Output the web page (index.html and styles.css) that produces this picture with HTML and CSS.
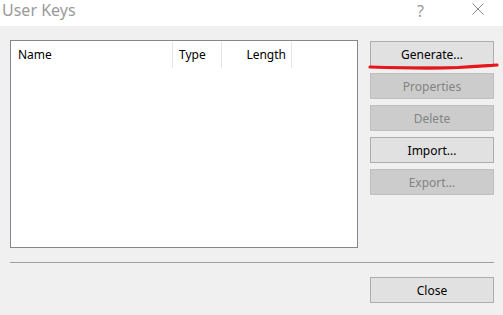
FILE: index.html
```html
<!DOCTYPE html>
<html lang="en">
<head>
    <meta charset="UTF-8">
    <title>User Keys</title>
    <link rel="stylesheet" href="styles.css">
</head>
<body>
    <div class="titlebar">
        <span class="title">User Keys</span>
        <span class="tb-btn help">?</span>
        <span class="tb-btn close-x">
            <svg width="12" height="12" viewBox="0 0 12 12"><path d="M0.5 0.5L11.5 11.5M11.5 0.5L0.5 11.5" stroke="#8a8a8a" stroke-width="1" fill="none"/></svg>
        </span>
    </div>

    <div class="content">
        <div class="main">
            <div class="listbox">
                <div class="list-header">
                    <div class="col col-name">Name</div>
                    <div class="col col-type">Type</div>
                    <div class="col col-length">Length</div>
                </div>
            </div>

            <div class="actions">
                <button class="btn">Generate...</button>
                <button class="btn" disabled>Properties</button>
                <button class="btn" disabled>Delete</button>
                <button class="btn">Import...</button>
                <button class="btn" disabled>Export...</button>
                <!-- red marker stroke under Generate -->
                <svg class="marker" width="132" height="10" viewBox="0 0 132 10">
                    <path d="M2 6 C30 7 60 8 90 6.5 C110 5 122 4.5 129 4" stroke="#e8161b" stroke-width="3.2" stroke-linecap="round" fill="none"/>
                </svg>
            </div>
        </div>

        <div class="separator"></div>

        <div class="footer">
            <button class="btn">Close</button>
        </div>
    </div>
</body>
</html>
```

FILE: styles.css
```css
body {
    margin: 0;
    background: #f0f0f0;
    font-family: 'Noto Sans', 'Open Sans', sans-serif;
    font-size: 12px;
    color: #000;
}

.titlebar {
    height: 26px;
    background: white;
    position: relative;
}

.title {
    display: block;
    margin-left: 2px;
    font-size: 16px;
    line-height: 21px;
    color: #9a9a9a;
}

.tb-btn {
    position: absolute;
    color: #9a9a9a;
}

.help {
    left: 417px;
    top: 0;
    font-size: 16px;
    line-height: 22px;
}

.close-x {
    left: 472px;
    top: 3px;
    line-height: 0;
}

.content {
    padding: 14px 9px 0 10px;
}

.main {
    display: flex;
    gap: 12px;
}

.listbox {
    width: 346px;
    height: 206px;
    background: white;
    border: 1px solid #828790;
}

.list-header {
    display: flex;
    height: 26px;
    margin-top: 1px;
}

.col {
    line-height: 26px;
    border-right: 1px solid #e5e5e5;
    box-sizing: border-box;
}

.col-name {
    width: 162px;
    padding-left: 7px;
}

.col-type {
    width: 49px;
    padding-left: 6px;
}

.col-length {
    width: 70px;
    text-align: right;
    padding-right: 5px;
}

.actions {
    display: flex;
    flex-direction: column;
    gap: 6px;
    position: relative;
    padding-top: 1px;
}

.btn {
    width: 124px;
    height: 26px;
    background: #e1e1e1;
    border: 1px solid #adadad;
    font-family: 'Noto Sans', 'Open Sans', sans-serif;
    font-size: 12px;
    color: #000;
    padding: 0;
}

.btn:disabled {
    background: #cccccc;
    border-color: #bfbfbf;
    color: #838383;
}

.marker {
    position: absolute;
    left: -2px;
    top: 21px;
}

.separator {
    height: 1px;
    background: #a0a0a0;
    margin-top: 14px;
    width: 484px;
}

.footer {
    display: flex;
    justify-content: flex-end;
    padding-top: 14px;
}
```
